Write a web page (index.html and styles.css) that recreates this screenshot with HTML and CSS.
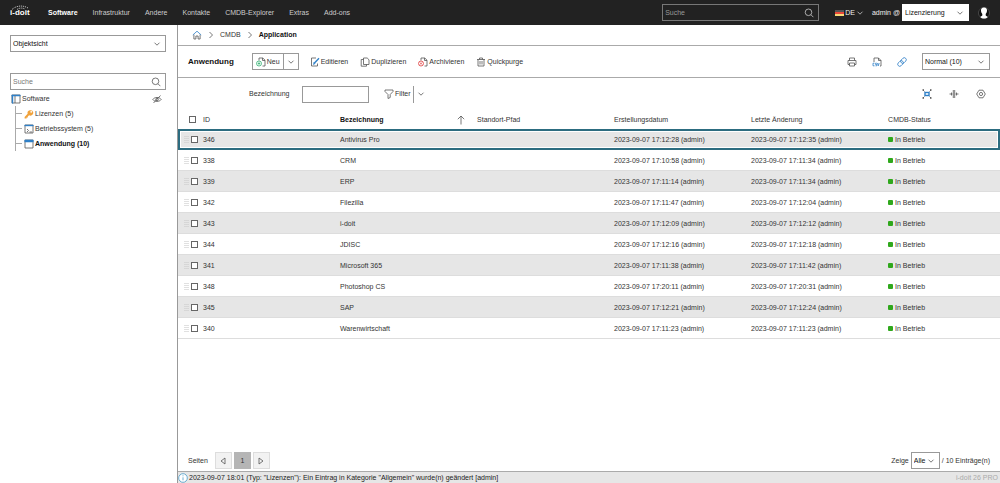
FILE: index.html
```
<!DOCTYPE html>
<html lang="de">
	<head>
		<meta charset="utf-8">
		<title>i-doit - Application</title>
		<link rel="stylesheet" href="styles.css">
	</head>
	<body>
		<svg class="defs" aria-hidden="true">
			<symbol id="down" viewBox="0 0 8 8"><path d="M1.500 2.700 4 5.200l2.500-2.500"/></symbol>
			<symbol id="right" viewBox="0 0 8 8"><path d="M2.500 1 5.500 4l-3 3"/></symbol>
			<symbol id="search" viewBox="0 0 10 10"><circle cx="4.500" cy="4.300" r="3.300"/><path d="M7 6.800 9.400 9.200"/></symbol>
			<symbol id="doc" viewBox="0 0 10 10"><path d="M3 3.500V1h3.800L9 3.200V9H6.500M6.500 1v2.500H9"/></symbol>
		</svg>
		<header class="topbar">
			<a class="logo" href="#" aria-label="i-doit">
				<span>i-doit</span>
				<svg class="dots" viewBox="0 0 20 6"><path d="M2 4.500C6 .5 13 0 18 3M7 4.500c2-1.500 5-2 8-.5"/></svg>
			</a>
			<nav class="mainnav">
				<a class="active" href="#">Software</a>
				<a href="#">Infrastruktur</a>
				<a href="#">Andere</a>
				<a href="#">Kontakte</a>
				<a href="#">CMDB-Explorer</a>
				<a href="#">Extras</a>
				<a href="#">Add-ons</a>
			</nav>
			<div class="searchbox dark">
				<input type="search" placeholder="Suche" aria-label="Globale Suche">
				<svg class="icon"><use href="#search"/></svg>
			</div>
			<button class="lang" type="button">
				<svg class="flag" viewBox="0 0 9 6"><path fill="#555" d="M0 0h9v2H0z"/><path fill="#e8493a" d="M0 2h9v2H0z"/><path fill="#f8d878" d="M0 4h9v2H0z"/></svg>
				DE
				<svg class="chev"><use href="#down"/></svg>
			</button>
			<div class="tenant">
				<label for="tenant">admin @</label>
				<div class="select">
					<select id="tenant"><option>Lizenzierung</option></select>
					<svg class="chev"><use href="#down"/></svg>
				</div>
			</div>
			<svg class="avatar" viewBox="0 0 12 14"><circle cx="6" cy="7" r="5.500" fill="#111" stroke="#666" stroke-width=".6"/><path fill="#fff" stroke="none" d="M6 1.500c-2.200 0-3.200 1.300-3 3.300.1 1.500.7 2.500 1.300 3.200v1.500L2.200 11c2 2 5.600 2 7.600 0L7.700 9.500V8C8.300 7.300 8.900 6.300 9 4.800c.2-2-.8-3.300-3-3.300z"/></svg>
		</header>

		<div class="layout">
			<aside class="sidebar">
				<div class="select">
					<select aria-label="Ansicht"><option>Objektsicht</option></select>
					<svg class="chev"><use href="#down"/></svg>
				</div>
				<div class="searchbox">
					<input type="search" placeholder="Suche" aria-label="Baum durchsuchen">
					<svg class="icon"><use href="#search"/></svg>
				</div>
				<div class="tree">
					<div class="root">
						<svg class="icon" viewBox="0 0 10 10"><path class="fill-white" d="M1 1h8v8H1z"/><path class="blue thick" d="M.5 1.500h9M1.500 1v8.500"/><path d="M4 2v7"/></svg>
						<a href="#">Software</a>
						<svg class="icon eye" viewBox="0 0 10 10"><path d="M.8 5.500C2.500 2.800 7.500 2.800 9.200 5.500 7.500 8 2.500 8 .8 5.500z"/><circle cx="5" cy="5.500" r="1.300"/><path d="M1.500 9 8.500 1.500"/></svg>
					</div>
					<ul>
						<li>
							<svg class="icon key" viewBox="0 0 10 10"><path fill="#f0a23c" stroke="none" d="M9.300 3.500a2.900 2.900 0 0 1-4.200 2.800L3.800 7.500v1H2.600v1H.6V8l3-3.200A2.900 2.900 0 1 1 9.300 3.500z"/><circle cx="7.200" cy="2.800" r=".9" fill="#fff" stroke="none"/></svg>
							<a href="#">Lizenzen (5)</a>
						</li>
						<li>
							<svg class="icon" viewBox="0 0 10 10"><path class="fill-white" d="M1 1h8v8H1z"/><path class="blue thick" d="M.5 1.500h9"/><path d="M3 5 4.500 6.500 3 8M5.500 8H8"/></svg>
							<a href="#">Betriebssystem (5)</a>
						</li>
						<li class="active">
							<svg class="icon" viewBox="0 0 10 10"><path class="fill-white" d="M1 1h8v8H1z"/><path class="blue thick" d="M.5 1.500h9M.5 2.500h9"/></svg>
							<a href="#">Anwendung (10)</a>
						</li>
					</ul>
				</div>
			</aside>

			<main class="content">
				<nav class="breadcrumb" aria-label="Pfad">
					<a href="#" aria-label="Start"><svg class="icon" viewBox="0 0 10 10"><path d="M1.900 4.500V9h2V6h2.200v3h2V4.500"/><path class="blue" d="M.8 5 5 1.200 9.200 5"/></svg></a>
					<svg class="chev"><use href="#right"/></svg>
					<a href="#">CMDB</a>
					<svg class="chev"><use href="#right"/></svg>
					<strong>Application</strong>
				</nav>

				<div class="toolbar">
					<h1>Anwendung</h1>
					<div class="split">
						<button type="button">
							<svg class="icon"><use href="#doc"/><circle class="green" cx="3" cy="6.500" r="2.500"/><path class="green" d="M3 5.200v2.600M1.700 6.500h2.600"/></svg>
							Neu
						</button>
						<button class="more" type="button" aria-label="Weitere"><svg class="chev"><use href="#down"/></svg></button>
					</div>
					<div class="actions">
						<button type="button">
							<svg class="icon" viewBox="0 0 10 10"><path d="M6 1H1.500v8h6V6.500"/><path class="blue thick" d="M4 6.500 9 1.200"/><path class="blue" d="M3.500 7.500 4 5.500l1 1z"/></svg>
							Editieren
						</button>
						<button type="button">
							<svg class="icon" viewBox="0 0 10 10"><path d="M3.500 1h3.700L9 2.800V7.500H3.500zM3.500 2.500H1.200V9.200h5.300V7.500"/></svg>
							Duplizieren
						</button>
						<button type="button">
							<svg class="icon"><use href="#doc"/><circle class="red" cx="3" cy="6.500" r="2.500"/><path class="red" d="m2 5.500 2 2M4 5.500l-2 2"/></svg>
							Archivieren
						</button>
						<button type="button">
							<svg class="icon" viewBox="0 0 10 10"><path d="M1 2.500h8M3.500 2.500V1h3v1.500M2 2.500V9h6V2.500M4 4v3.500M6 4v3.500"/></svg>
							Quickpurge
						</button>
					</div>
					<div class="tools">
						<button type="button" aria-label="Drucken"><svg class="icon" viewBox="0 0 10 10"><path d="M2.500 3.500V1h5v2.500M2.500 7.500H1v-4h8v4H7.500M2.500 6h5v3h-5z"/></svg></button>
						<button type="button" aria-label="CSV-Export"><svg class="icon" viewBox="0 0 10 10"><path d="M2 5V1h4.500L9 3.500V9H8M6.500 1v2.500H9"/><path class="blue" d="M2.500 6.200H1v2.600h1.500M4.800 6.200H3.600v1.300h1.200v1.300H3.500M5.500 6l.8 2.800L7.200 6"/></svg></button>
						<button type="button" aria-label="Link"><svg class="icon" viewBox="0 0 10 10"><g class="blue" transform="rotate(-45 5 5)"><rect x="-.2" y="3" width="6.200" height="4" rx="2"/><rect x="4" y="3" width="6.200" height="4" rx="2"/></g></svg></button>
						<div class="select">
							<select aria-label="Darstellung"><option>Normal (10)</option></select>
							<svg class="chev"><use href="#down"/></svg>
						</div>
					</div>
				</div>

				<div class="filter">
					<label for="filter">Bezeichnung</label>
					<input id="filter" type="text">
					<button type="button">
						<svg class="icon" viewBox="0 0 10 10"><path d="M1 1h8v1.500L6.200 5.500v3L4 9.500v-4L1 2.500z"/></svg>
						Filter
					</button>
					<button class="more" type="button" aria-label="Filteroptionen"><svg class="chev"><use href="#down"/></svg></button>
					<div class="tools">
						<button type="button" aria-label="Vollbild"><svg class="icon" viewBox="0 0 10 10"><rect class="blue thick" x="3" y="3.500" width="4" height="3"/><path class="thick" d="M.5 1H2M8 1h1.500M.5 9H2M8 9h1.500"/><path d="m1 1 1.500 1.500M9 1 7.500 2.500M1 9l1.500-1.500M9 9 7.500 7.500"/></svg></button>
						<button type="button" aria-label="Spaltenbreite"><svg class="icon" viewBox="0 0 10 10"><path d="M4.300 1v8M5.700 1v8M.5 5h3M6.500 5h3M2.500 3.500v3M7.500 3.500v3"/></svg></button>
						<button type="button" aria-label="Einstellungen"><svg class="icon" viewBox="0 0 10 10"><path d="M3 1.200h4L9.300 5 7 8.800H3L.7 5z"/><circle cx="5" cy="5" r="1.600"/></svg></button>
					</div>
				</div>

				<table class="list">
					<colgroup><col class="c-check"><col><col><col><col><col><col class="c-rest"></colgroup>
					<thead>
						<tr>
							<th><input type="checkbox" aria-label="Alle auswählen"></th>
							<th>ID</th>
							<th class="sorted"><div>Bezeichnung <svg class="icon" viewBox="0 0 10 10"><path d="M5 9.500V1M1.800 4.200 5 1l3.200 3.200"/></svg></div></th>
							<th>Standort-Pfad</th>
							<th>Erstellungsdatum</th>
							<th>Letzte Änderung</th>
							<th>CMDB-Status</th>
						</tr>
					</thead>
					<tbody id="rows"></tbody>
				</table>

				<div class="pager">
					<span>Seiten</span>
					<div class="pages">
						<button type="button" aria-label="Zurück"><svg class="chev" viewBox="0 0 8 8"><path d="M6 1 2 4l4 3z"/></svg></button>
						<button class="current" type="button">1</button>
						<button type="button" aria-label="Weiter"><svg class="chev" viewBox="0 0 8 8"><path d="m2 1 4 3-4 3z"/></svg></button>
					</div>
					<label for="limit">Zeige</label>
					<div class="select">
						<select id="limit"><option>Alle</option></select>
						<svg class="chev"><use href="#down"/></svg>
					</div>
					<span>/ 10 Einträge(n)</span>
				</div>

				<footer class="status">
					<svg class="icon" viewBox="0 0 10 10"><circle cx="5" cy="5" r="4.300" fill="#fff"/><path d="M5 4.300v3M5 2.300v1"/></svg>
					<span>2023-09-07 18:01 (Typ: "Lizenzen"): Ein Eintrag in Kategorie "Allgemein" wurde(n) geändert [admin]</span>
					<span class="version">i-doit 26 PRO</span>
				</footer>
			</main>
		</div>
		<script src="list.js"></script>
	</body>
</html>
```
FILE: styles.css
```
* {
	box-sizing: border-box;
}

body {
	margin: 0;
	min-height: 100vh;
	display: flex;
	flex-direction: column;
	background: #fff;
	color: #333;
	font: 7px/10px "Liberation Sans", Arial, sans-serif;
}

a {
	color: inherit;
	text-decoration: none;
}

button, input, select {
	font: inherit;
	color: inherit;
	margin: 0;
	padding: 0;
	border: 0;
	border-radius: 0;
	background: none;
	appearance: none;
}

button {
	display: flex;
	align-items: center;
	gap: 1px;
}

svg {
	flex: none;
	fill: none;
	stroke: #555;
	stroke-width: .8;
}

.defs {
	position: absolute;
	width: 0;
	height: 0;
}

.icon {
	width: 10px;
	height: 10px;
}

.chev {
	width: 8px;
	height: 8px;
}

.blue { stroke: #2f80c8; }
.green { stroke: #30b070; }
.red { stroke: #e03c3c; }
.thick { stroke-width: 1.4; }
.fill-white { fill: #fff; }

.select {
	position: relative;
	border: 1px solid #999;
	background: #fff;
	color: #111;
}

.select select {
	display: block;
	width: 100%;
	height: 15px;
	padding: 0 12px 0 2px;
}

.select .chev {
	position: absolute;
	right: 4px;
	top: 4px;
	pointer-events: none;
}

.searchbox {
	display: flex;
	align-items: center;
	height: 17px;
	padding-right: 4px;
	border: 1px solid #999;
}

.searchbox input {
	flex: 1;
	min-width: 0;
	padding-left: 2px;
}

.searchbox input::placeholder {
	color: #777;
}

/* top bar */
.topbar {
	display: flex;
	align-items: center;
	height: 25px;
	padding: 0 10px;
	background: #222;
	color: #ccc;
}

.logo {
	position: relative;
	width: 38px;
	color: #fff;
	font-size: 8px;
	font-weight: bold;
}

.dots {
	position: absolute;
	left: 0;
	top: -3px;
	width: 20px;
	height: 6px;
	stroke: #fff;
	stroke-dasharray: 1 1;
}

.mainnav {
	flex: 1;
	display: flex;
	gap: 15px;
}

.mainnav .active {
	color: #fff;
	font-weight: bold;
}

.dark {
	width: 157px;
	border-color: #777;
}

.dark input::placeholder {
	color: #999;
}

.dark .icon, .lang .chev {
	stroke: #ccc;
}

.lang {
	margin-left: 16px;
	color: #eee;
}

.flag {
	width: 9px;
	height: 6px;
	stroke: none;
}

.tenant {
	display: flex;
	align-items: center;
	gap: 2px;
	margin-left: 8px;
	color: #eee;
}

.tenant .select {
	width: 67px;
	border-color: #fff;
}

.avatar {
	width: 12px;
	height: 14px;
	margin-left: 9px;
}

/* sidebar */
.layout {
	flex: 1;
	display: flex;
}

.sidebar {
	width: 178px;
	padding: 10px 11px 10px 10px;
	border-right: 1px solid #999;
}

.sidebar .searchbox {
	margin: 21px 0 2px;
}

.tree a {
	flex: 1;
}

.root, .tree li {
	display: flex;
	align-items: center;
	gap: 1px;
}

.root {
	height: 14px;
	padding: 0 4px 0 1px;
}

.tree ul {
	margin: 0 0 0 5px;
	padding: 0;
	border-left: 1px solid #aaa;
	list-style: none;
}

.tree li {
	height: 15px;
}

.tree li::before {
	content: "";
	width: 6px;
	margin-right: 1px;
	border-top: 1px solid #aaa;
}

.tree .active {
	color: #111;
	font-weight: bold;
}

/* content */
.content {
	flex: 1;
	min-width: 0;
	display: flex;
	flex-direction: column;
}

.breadcrumb {
	display: flex;
	align-items: center;
	gap: 5px;
	height: 21px;
	padding: 0 14px;
	border-bottom: 1px solid #aaa;
}

.breadcrumb strong {
	color: #111;
}

.breadcrumb .icon {
	display: block;
}

.toolbar {
	display: flex;
	align-items: center;
	height: 32px;
	padding: 0 10px;
	border-bottom: 1px solid #aaa;
}

.toolbar h1 {
	margin: 0 18px 0 0;
	color: #111;
	font-size: 8px;
}

.split {
	display: flex;
	height: 17px;
	border: 1px solid #999;
}

.split button {
	padding: 0 3px;
}

.split .more {
	border-left: 1px solid #999;
}

.actions {
	display: flex;
	gap: 12px;
	margin-left: 11px;
}

.tools {
	display: flex;
	align-items: center;
	gap: 15px;
	margin-left: auto;
}

.tools .select {
	width: 68px;
}

.filter {
	display: flex;
	align-items: center;
	height: 32px;
	padding: 0 14px 0 71px;
}

.filter label {
	width: 53px;
}

.filter input {
	width: 67px;
	height: 17px;
	margin-right: 15px;
	border: 1px solid #999;
}

.filter .more {
	height: 17px;
	margin-left: 2px;
	padding-left: 3px;
	border-left: 1px solid #999;
}

.filter .tools {
	gap: 17px;
}

.list {
	width: 100%;
	table-layout: fixed;
	border-collapse: collapse;
}

.list col {
	width: 16.67%;
}

.list .c-check {
	width: 25px;
}

.list .c-rest {
	width: auto;
}

.list th, .list td {
	height: 21px;
	padding: 0;
	font-weight: normal;
	text-align: left;
	white-space: nowrap;
}

.list th {
	height: 19px;
}

.list th:first-child {
	padding-left: 11px;
}

.list .sorted {
	color: #111;
	font-weight: bold;
}

.sorted div {
	display: flex;
	justify-content: space-between;
	padding-right: 11px;
}

.list tbody tr {
	box-shadow: inset 0 -1px #ddd;
}

.list tbody tr:nth-child(odd) {
	background: #e6e6e6;
}

.list tbody .selected {
	outline: 2px solid #2c6c80;
	outline-offset: -2px;
	box-shadow: inset 0 0 0 3px #fff;
}

.list input {
	display: block;
	width: 7px;
	height: 7px;
	border: 1px solid #666;
	background: #fff;
}

.pick {
	display: flex;
	align-items: center;
	gap: 2px;
	padding-left: 6px;
}

.grip {
	width: 5px;
	height: 8px;
	background: repeating-linear-gradient(#ccc 0 1px, transparent 1px 2px);
	opacity: .6;
}

.led {
	display: inline-block;
	width: 5px;
	height: 5px;
	margin-right: 2px;
	border-radius: 1px;
	background: #2fa81c;
}

.pager {
	display: flex;
	align-items: center;
	gap: 2px;
	margin-top: auto;
	padding: 2px 10px;
}

.pages {
	flex: 1;
	display: flex;
	gap: 2px;
	margin-left: 5px;
}

.pages button {
	justify-content: center;
	width: 17px;
	height: 17px;
	border: 1px solid #ddd;
	background: #f2f2f2;
}

.pages .current {
	border-color: #b5b5b5;
	background: #b5b5b5;
}

.pager .select {
	width: 29px;
}

.status {
	display: flex;
	align-items: center;
	gap: 1px;
	height: 12px;
	padding: 0 2px 0 0;
	border-top: 1px solid #aaa;
	background: #e6e6e6;
	color: #222;
}

.status .icon {
	stroke: #4a9cc9;
}

.version {
	margin-left: auto;
	color: #aaa;
}
```
FILE: list.js
```
(function () {
	var items = [
		[346, 'Antivirus Pro', '17:12:28', '17:12:35'],
		[338, 'CRM', '17:10:58', '17:11:34'],
		[339, 'ERP', '17:11:14', '17:11:34'],
		[342, 'Filezilla', '17:11:47', '17:12:04'],
		[343, 'i-doit', '17:12:09', '17:12:12'],
		[344, 'JDISC', '17:12:16', '17:12:18'],
		[341, 'Microsoft 365', '17:11:38', '17:11:42'],
		[348, 'Photoshop CS', '17:20:11', '17:20:31'],
		[345, 'SAP', '17:12:21', '17:12:24'],
		[340, 'Warenwirtschaft', '17:11:23', '17:11:23']
	];

	function stamp(time) {
		return '2023-09-07 ' + time + ' (admin)';
	}

	document.getElementById('rows').innerHTML = items.map(function (item, idx) {
		return '<tr' + (idx === 0 ? ' class="selected"' : '') + '>' +
			'<td><div class="pick"><span class="grip"></span><input type="checkbox" aria-label="' + item[1] + '"></div></td>' +
			'<td>' + item[0] + '</td>' +
			'<td>' + item[1] + '</td>' +
			'<td></td>' +
			'<td>' + stamp(item[2]) + '</td>' +
			'<td>' + stamp(item[3]) + '</td>' +
			'<td><span class="led"></span>In Betrieb</td>' +
			'</tr>';
	}).join('');
}());
```
